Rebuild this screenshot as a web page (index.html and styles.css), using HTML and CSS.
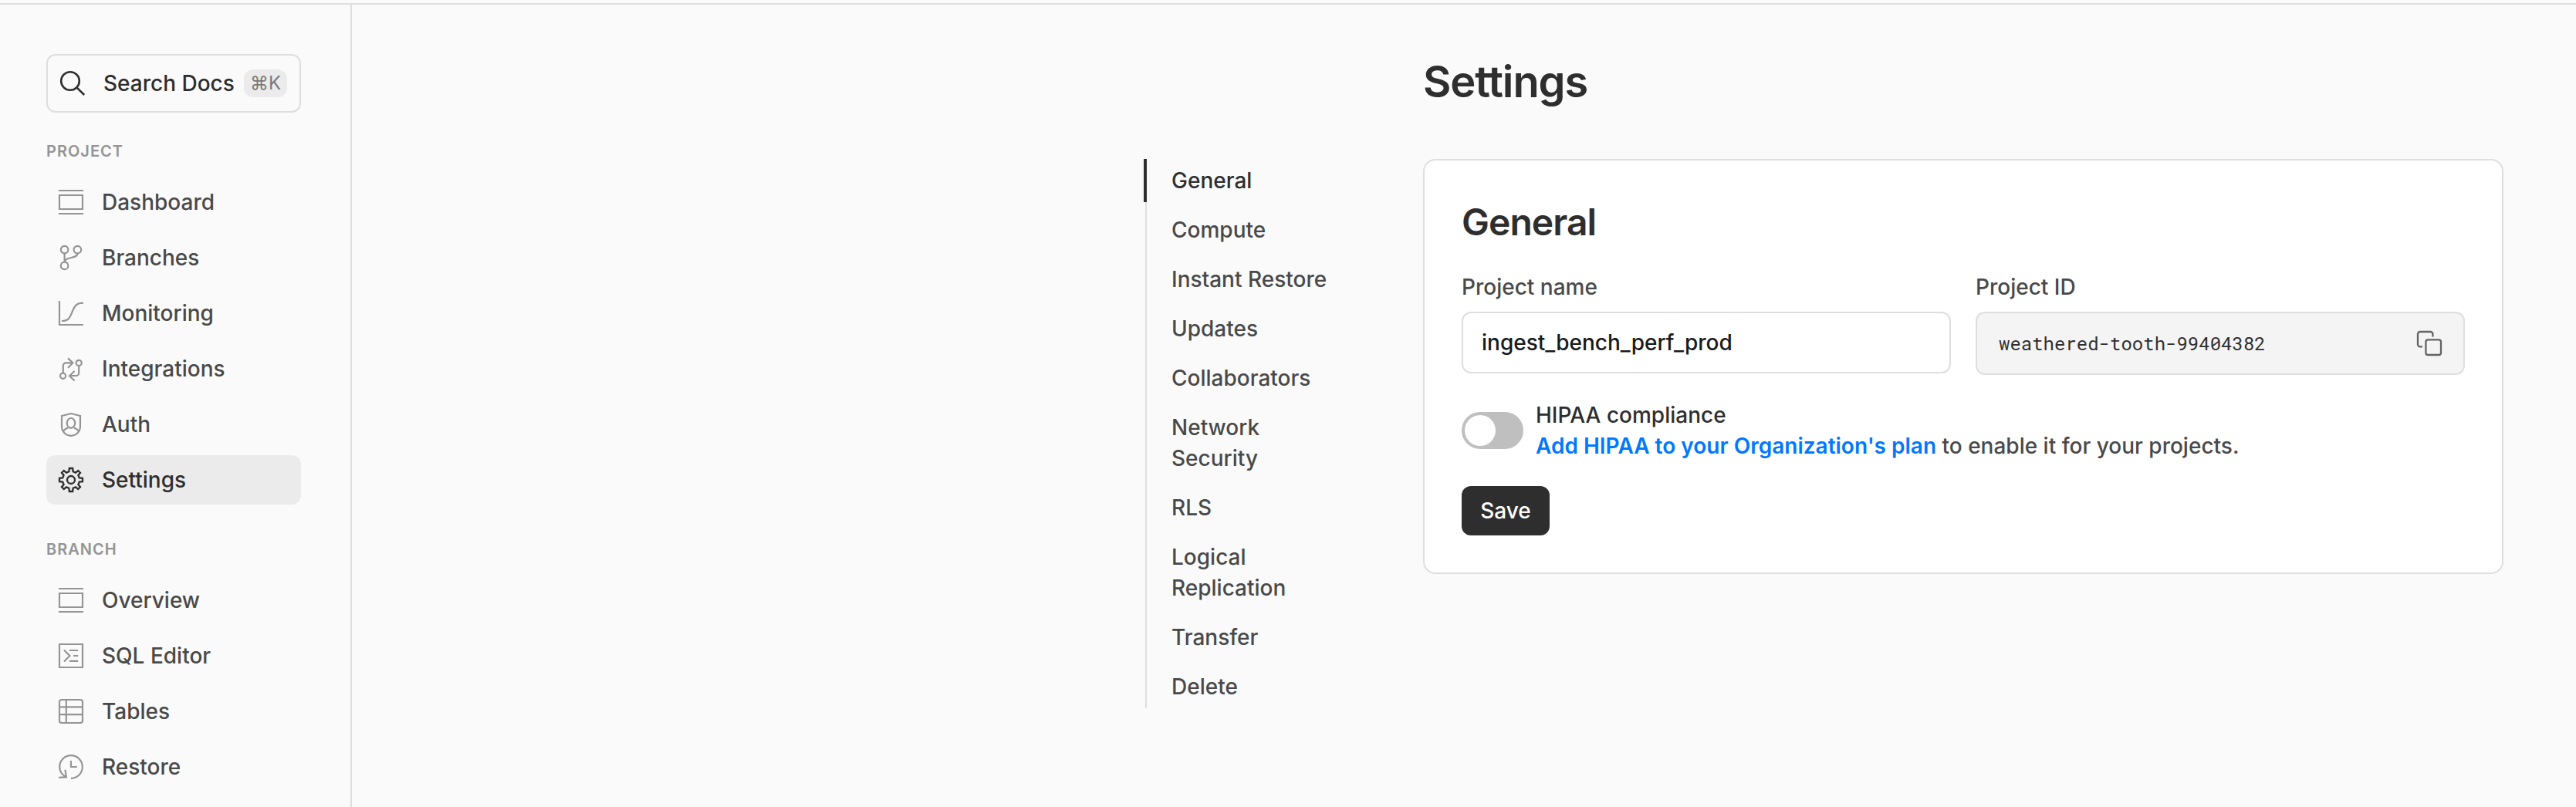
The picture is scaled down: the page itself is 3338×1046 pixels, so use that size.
FILE: index.html
```html
<!DOCTYPE html>
<html lang="en">
<head>
<meta charset="utf-8">
<title>Settings</title>
<link rel="stylesheet" href="styles.css">
</head>
<body>
<div class="layout">
  <aside class="sidebar">
    <button class="search" type="button">
      <svg class="icon" viewBox="0 0 16 16"><circle cx="6.5" cy="6.5" r="5.9"/><path d="M10.7 10.7l4.9 4.8"/></svg>
      <span class="search-label">Search Docs</span>
      <kbd class="shortcut">⌘K</kbd>
    </button>
    <section class="group">
      <h2 class="group-title">Project</h2>
      <nav class="nav">
        <a class="nav-item"><svg class="icon" viewBox="0 0 16 16"><path d="M0 .5h16M0 15.5h16M.5 3.5h15v9H.5z"/></svg>Dashboard</a>
        <a class="nav-item"><svg class="icon" viewBox="0 0 16 16"><circle cx="3.8" cy="2.8" r="2.4"/><circle cx="12.2" cy="2.8" r="2.4"/><circle cx="3.8" cy="13.2" r="2.4"/><path d="M3.8 5.2v5.6M12.2 5.2c-.1 3.6-7 2-8.4 5"/></svg>Branches</a>
        <a class="nav-item"><svg class="icon" viewBox="0 0 16 16"><path d="M.5 0v15.5H16M2 13c4 0 5.1-1.5 6.8-5.9S12 1.3 16 1.3"/></svg>Monitoring</a>
        <a class="nav-item"><svg class="icon" viewBox="0 0 16 16"><circle cx="2.8" cy="12.6" r="1.8"/><circle cx="13.1" cy="4.2" r="1.8"/><path d="M2.9 10.8V6c0-1 .8-1.8 1.8-1.8h4.5M6 1.2l3.2 3L6 7.4M13.1 6v4.7c0 1-.8 1.8-1.8 1.8H7M10.3 9.5L7 12.6l3.3 3.1"/></svg>Integrations</a>
        <a class="nav-item"><svg class="icon" viewBox="0 0 16 16"><path d="M8 1l6 1.5v6.9a6 6 0 0 1-12 0V2.5z"/><ellipse cx="8" cy="7.2" rx="2.6" ry="3.2"/><path d="M3 12.5c.5-1.1 1.5-1.7 3.1-2.3M13 12.5c-.5-1.1-1.5-1.7-3.1-2.3"/></svg>Auth</a>
        <a class="nav-item active"><svg class="icon" viewBox="0 0 16 16"><path d="M6.9 .5H9.1L9.3 2.6L11 3.3L12.6 2L14 3.4L12.7 5L13.4 6.7L15.5 6.9V9.1L13.4 9.3L12.7 11L14 12.6L12.6 14L11 12.7L9.3 13.4L9.1 15.5H6.9L6.7 13.4L5 12.7L3.4 14L2 12.6L3.3 11L2.6 9.3L.5 9.1V6.9L2.6 6.7L3.3 5L2 3.4L3.4 2L5 3.3L6.7 2.6z"/><circle cx="8" cy="8" r="2.5"/></svg>Settings</a>
      </nav>
    </section>
    <section class="group">
      <h2 class="group-title">Branch</h2>
      <nav class="nav">
        <a class="nav-item"><svg class="icon" viewBox="0 0 16 16"><path d="M0 .5h16M0 15.5h16M.5 3.5h15v9H.5z"/></svg>Overview</a>
        <a class="nav-item"><svg class="icon" viewBox="0 0 16 16"><path d="M.5 .5h15v15H.5zM3.5 4.3L7.2 8l-3.7 3.7M7 4.5h5.6M9.5 8h3.1M7 11.4h5.6"/></svg>SQL Editor</a>
        <a class="nav-item"><svg class="icon" viewBox="0 0 16 16"><rect x=".5" y=".5" width="15" height="15" rx="1.5"/><path d="M4.9 .5v15M.5 5.2h15M.5 10.1h15"/></svg>Tables</a>
        <a class="nav-item"><svg class="icon" viewBox="0 0 16 16"><path d="M8 15.4A7.4 7.4 0 1 0 .6 8c0 3 1.6 5.2 4.3 6.5M4.2 9.9l.8 4.7-4.9.3M8 4v4h3.9"/></svg>Restore</a>
      </nav>
    </section>
  </aside>
  <main class="content">
    <nav class="toc">
      <a class="toc-item current">General</a>
      <a class="toc-item">Compute</a>
      <a class="toc-item">Instant Restore</a>
      <a class="toc-item">Updates</a>
      <a class="toc-item">Collaborators</a>
      <a class="toc-item">Network Security</a>
      <a class="toc-item">RLS</a>
      <a class="toc-item">Logical Replication</a>
      <a class="toc-item">Transfer</a>
      <a class="toc-item">Delete</a>
    </nav>
    <div class="page">
      <h1 class="page-title">Settings</h1>
      <section class="card">
        <h2 class="card-title">General</h2>
        <div class="fields">
          <div class="field">
            <span class="label">Project name</span>
            <div class="input">ingest_bench_perf_prod</div>
          </div>
          <div class="field">
            <span class="label">Project ID</span>
            <div class="input readonly"><span class="mono">weathered-tooth-99404382</span>
              <svg class="icon" viewBox="0 0 16 16"><path d="M10.2 3.7V2A1.5 1.5 0 0 0 8.7 .5H2A1.5 1.5 0 0 0 .5 2v6.7a1.5 1.5 0 0 0 1.5 1.5h1.5"/><rect x="5.7" y="5.7" width="9.8" height="9.8" rx="1.4"/></svg>
            </div>
          </div>
        </div>
        <div class="option">
          <span class="toggle"><span class="knob"></span></span>
          <div class="option-text">
            <div class="option-title">HIPAA compliance</div>
            <div class="option-hint"><a class="link">Add HIPAA to your Organization's plan</a> to enable it for your projects.</div>
          </div>
        </div>
        <button class="save" type="button">Save</button>
      </section>
    </div>
  </main>
</div>
</body>
</html>
```
FILE: styles.css
```css
* { box-sizing: border-box; }

body {
  margin: 0;
  background: #fafafa;
  color: #494949;
  font: 500 28px/40px Inter, "Liberation Sans", sans-serif;
  -webkit-font-smoothing: antialiased;
}

h1, h2 { margin: 0; }
button { font: inherit; margin: 0; }

.layout {
  display: flex;
  height: 1042px;
  margin-top: 4px;
  border-top: 2px solid #dedede;
  overflow: hidden;
}

.sidebar {
  flex: none;
  width: 456px;
  padding: 64px 64px 0 60px;
  border-right: 2px solid #dedede;
}

.icon {
  flex: none;
  width: 32px;
  height: 32px;
  fill: none;
  stroke: currentColor;
  stroke-width: 1.08;
  overflow: visible;
}

.search {
  display: flex;
  align-items: center;
  width: 330px;
  height: 76px;
  padding: 0 16px;
  border: 2px solid #dedede;
  border-radius: 12px;
  background: none;
  color: #2e2e2e;
}
.search .icon { stroke-width: 1.3; }
.search-label { margin-left: 24px; white-space: nowrap; }
.shortcut {
  display: flex;
  align-items: center;
  justify-content: center;
  width: 56px;
  height: 36px;
  margin-left: auto;
  border-radius: 12px;
  background: #ebebeb;
  color: #797979;
  font: 400 24px/36px Inter, sans-serif;
}

.group { padding-top: 34px; }
.group + .group { padding-top: 42px; }
.group-title {
  color: #949494;
  font-size: 20px;
  font-weight: 600;
  line-height: 32px;
  letter-spacing: 1px;
  text-transform: uppercase;
}
.nav {
  display: flex;
  flex-direction: column;
  gap: 8px;
  padding-top: 18px;
}
.nav-item {
  display: flex;
  align-items: center;
  gap: 24px;
  height: 64px;
  padding: 0 16px;
  border-radius: 12px;
}
.nav-item .icon { color: #949494; }
.active { background: #ebebeb; color: #2e2e2e; }
.nav-item.active .icon { color: #2e2e2e; stroke-width: 1.15; }

.content {
  flex: 1;
  display: flex;
  justify-content: flex-end;
  padding: 64px 94px 0 0;
}

.toc {
  display: flex;
  flex-direction: column;
  gap: 8px;
  align-self: flex-start;
  width: 240px;
  margin: 136px 120px 0 0;
  border-left: 2px solid #dedede;
}
.toc-item { padding: 8px 0 8px 32px; }
.current {
  margin-left: -4px;
  border-left: 4px solid #2e2e2e;
  color: #2e2e2e;
}

.page { width: 1400px; }
.page-title {
  height: 136px;
  color: #2e2e2e;
  font-size: 56px;
  font-weight: 600;
  line-height: 72px;
  letter-spacing: -0.02em;
}

.card {
  padding: 48px;
  border: 2px solid #dedede;
  border-radius: 16px;
  background: #fff;
}
.card-title {
  color: #2e2e2e;
  font-size: 48px;
  font-weight: 600;
  line-height: 64px;
  letter-spacing: -0.02em;
}
.fields {
  display: grid;
  grid-template-columns: 1fr 1fr;
  gap: 32px;
  align-items: start;
  margin-top: 32px;
}
.label { display: block; }
.input {
  display: flex;
  align-items: center;
  height: 80px;
  margin-top: 12px;
  padding: 0 24px;
  border: 2px solid #dedede;
  border-radius: 12px;
  color: #1a1a1a;
}
.readonly {
  justify-content: space-between;
  height: 82px;
  padding: 0 28px;
  background: #f4f4f4;
  color: #2e2e2e;
}
.readonly .icon { color: #636363; stroke-width: 1.15; }
.mono { font: 400 24px/32px "Roboto Mono", "Liberation Mono", monospace; }

.option {
  display: flex;
  align-items: center;
  gap: 16px;
  margin-top: 32px;
}
.toggle {
  width: 80px;
  height: 48px;
  padding: 4px;
  border-radius: 24px;
  background: #bfbfbf;
}
.knob {
  display: block;
  width: 40px;
  height: 40px;
  border-radius: 50%;
  background: #fff;
}
.option-title { color: #2e2e2e; }
.link { color: #0078ff; font-weight: 600; }

.save {
  display: block;
  width: 114px;
  height: 64px;
  margin-top: 32px;
  padding: 0;
  border: 0;
  border-radius: 12px;
  background: #2e2e2e;
  color: #fff;
}
```
